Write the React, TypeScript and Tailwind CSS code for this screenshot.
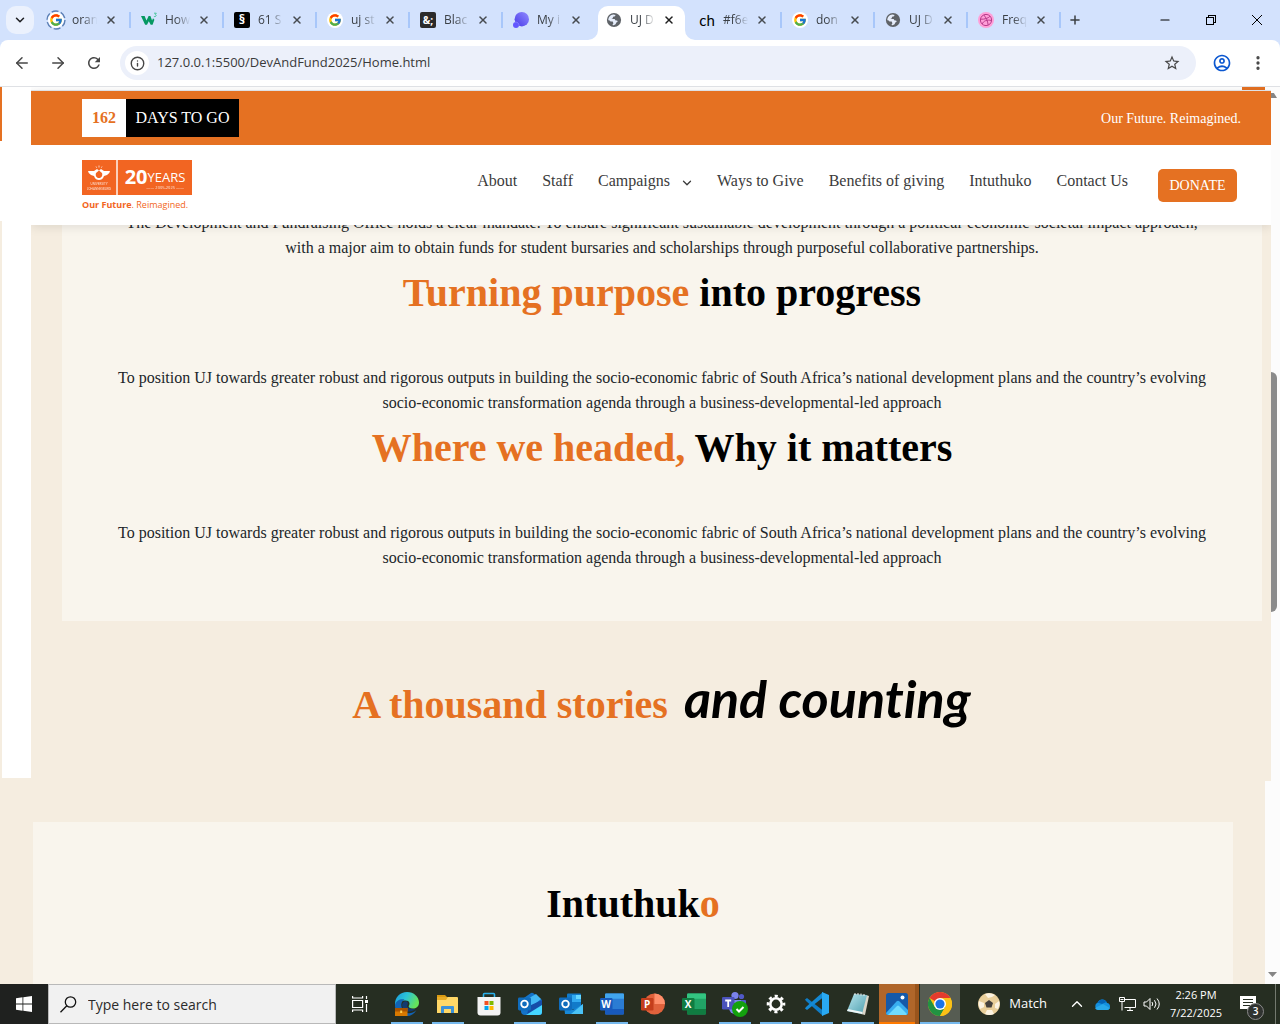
import React from "react";
import {
  ArrowLeft,
  ArrowRight,
  ChevronDown,
  ChevronUp,
  EllipsisVertical,
  Info,
  Minus,
  Plus,
  X,
} from "lucide-react";
import { FcGoogle } from "react-icons/fc";
import { MdOutlineAccountCircle, MdOutlineStarBorder, MdRefresh } from "react-icons/md";

const ui = "font-['Open_Sans','Noto_Sans',sans-serif]";
const serif = "font-['Liberation_Serif',serif]";

function Google() {
  return (
    <span className="flex size-4 items-center justify-center rounded-full bg-white">
      <FcGoogle size={14} />
    </span>
  );
}

function LoadingGoogle() {
  return (
    <span className="relative flex size-5 items-center justify-center">
      <svg viewBox="0 0 20 20" className="absolute inset-0 size-5" fill="none">
        <circle cx="10" cy="10" r="9" stroke="#5b7fb5" strokeWidth="1.4" strokeDasharray="7 2.42" />
      </svg>
      <Google />
    </span>
  );
}

function W3() {
  return (
    <svg viewBox="0 0 16 16" className="size-4" fill="#059862">
      <path d="M0 4h3.6l1.9 4.4L7.6 4h1.8l1.7 4.4.9-2.2 1.4 1.5-1.8 5.1H9.7L7.8 9.3 6 12.8H4.1z" />
      <path d="M13 1.2h2.3l-1 1.3c1.5.4 1.1 2.6-1.4 2" fill="none" stroke="#3cc292" strokeWidth=".9" />
    </svg>
  );
}

function Globe() {
  return (
    <svg viewBox="0 0 16 16" className="size-4">
      <circle cx="8" cy="8" r="7.1" fill="#5f6368" />
      <path
        d="M2.3 8.2c.1-3.2 2.3-5.4 5-5.7L9.7 3 8.6 4.5 7 4.8 6.8 6.2 5.4 6.9h3.2l1 1.5h1.5l.6 1.4-1.4.8-.7 1.7-2 1-1.2-.3 1-1.8-.7-1.7H4.6L3.2 8.2z"
        fill="#e6edfb"
      />
    </svg>
  );
}

function Dribbble() {
  return (
    <svg viewBox="0 0 16 16" className="size-4" fill="none" stroke="#b83d8c" strokeWidth="1">
      <circle cx="8" cy="8" r="8" fill="#ff9fd8" stroke="none" />
      <circle cx="8" cy="8" r="5.6" />
      <path d="M5.8 3c2.4 2.7 3.8 6 4.4 10M2.6 7.2C6.4 7.4 10 6.4 12 4.3M4.1 12c1.5-3.2 5-4.6 9.3-3.5" />
    </svg>
  );
}

function Blob() {
  return (
    <svg viewBox="0 0 16 16" className="size-4">
      <defs>
        <linearGradient id="blob" x1="1" y1="0" x2="0" y2="1">
          <stop offset="0" stopColor="#918cff" />
          <stop offset="1" stopColor="#493ae8" />
        </linearGradient>
      </defs>
      <circle cx="8.8" cy="7.2" r="7.2" fill="url(#blob)" />
      <circle cx="3" cy="13" r="3" fill="#6257ff" />
      <path d="M1.5 10.3c2.3-.9 4.4.7 4.6 3.3" stroke="#a5a0ff" strokeWidth=".5" fill="none" />
    </svg>
  );
}

const tabs: { title: string; icon: React.ReactNode; active?: boolean; noLine?: boolean }[] = [
  { title: "oran", icon: <LoadingGoogle /> },
  { title: "How", icon: <W3 /> },
  {
    title: "61 S",
    icon: (
      <span className="flex size-4 items-center justify-center rounded-xs bg-black text-[13px] font-bold text-white">§</span>
    ),
  },
  { title: "uj st", icon: <Google /> },
  {
    title: "Blac",
    icon: (
      <span className="flex size-4 items-center justify-center rounded-xs bg-[#2b2b2b] text-[10px] font-bold text-white">&amp;;</span>
    ),
  },
  { title: "My i", icon: <Blob />, noLine: true },
  { title: "UJ D", icon: <Globe />, active: true, noLine: true },
  { title: "#f6e", icon: <span className="font-['Lato',sans-serif] text-[15px] leading-4 text-black">ch</span> },
  { title: "don", icon: <Google /> },
  { title: "UJ D", icon: <Globe /> },
  { title: "Freq", icon: <Dribbble /> },
];

function TabStrip() {
  return (
    <div className="flex h-10 shrink-0 items-center bg-[#d3e2fd] pl-[6px] text-[#3b4046]">
      <button aria-label="Search tabs" className="mr-[3px] flex size-7 items-center justify-center rounded-[10px] bg-[#ebf1fd]">
        <ChevronDown size={14} strokeWidth={2.6} color="#202124" />
      </button>
      <div className="flex min-w-0 flex-1">
        {tabs.map((t, i) => (
          <div key={i} className="relative flex h-10 min-w-0 max-w-[93px] flex-1 items-center">
            {t.active && (
              <>
                <div className="absolute inset-x-[3px] top-[6px] bottom-0 rounded-t-[10px] bg-white" />
                <svg viewBox="0 0 10 10" className="absolute bottom-0 -left-[7px] size-[10px]" fill="#fff">
                  <path d="M10 0v10H0A10 10 0 0 0 10 0z" />
                </svg>
                <svg viewBox="0 0 10 10" className="absolute -right-[7px] bottom-0 size-[10px]" fill="#fff">
                  <path d="M0 0v10h10A10 10 0 0 1 0 0z" />
                </svg>
              </>
            )}
            <a href="#" className="relative flex min-w-0 items-center pl-[9px]">
              <span className="flex size-5 shrink-0 items-center justify-center">{t.icon}</span>
              <span className="ml-[6px] w-7 overflow-hidden text-[12px] whitespace-nowrap [mask-image:linear-gradient(to_right,black_40%,transparent_90%)]">
                {t.title}
              </span>
            </a>
            <button aria-label="Close tab" className="relative ml-[3px] flex size-4 items-center justify-center">
              <X size={12} strokeWidth={3} color={t.active ? "#1f1f1f" : "#474b50"} />
            </button>
            {!t.noLine && <div className="absolute -right-px h-4 w-[2px] bg-[#a8c7fa]" />}
          </div>
        ))}
        <button aria-label="New tab" className="flex h-10 w-[30px] items-center justify-center">
          <Plus size={14} strokeWidth={2.6} color="#3c4043" />
        </button>
      </div>
      <div className="flex shrink-0 text-black">
        <button aria-label="Minimize" className="flex h-10 w-[46px] items-center justify-center">
          <Minus size={14} strokeWidth={1.8} />
        </button>
        <button aria-label="Restore" className="flex h-10 w-[46px] items-center justify-center">
          <svg viewBox="0 0 10 10" className="size-[10px]" fill="none" stroke="#000" shapeRendering="crispEdges">
            <path d="M.5 2.5h7v7h-7zM2.5 2.5v-2h7v7h-2" />
          </svg>
        </button>
        <button aria-label="Close" className="flex h-10 w-[46px] items-center justify-center">
          <svg viewBox="0 0 10 10" className="size-[10px]" stroke="#000">
            <path d="M0 0l10 10M10 0L0 10" />
          </svg>
        </button>
      </div>
    </div>
  );
}

function Toolbar() {
  return (
    <div className="shrink-0 bg-[#d3e2fd]">
      <div className="flex h-[47px] items-center rounded-t-lg border-b border-[#dfe1e5] bg-white text-[#474747]">
        <button aria-label="Back" className="ml-[13px]">
          <ArrowLeft size={18} strokeWidth={2} />
        </button>
        <button aria-label="Forward" className="ml-[18px]">
          <ArrowRight size={18} strokeWidth={2} />
        </button>
        <button aria-label="Reload" className="ml-[18px]">
          <MdRefresh size={18} />
        </button>
        <form className="ml-[17px] flex h-[34px] min-w-0 flex-1 items-center rounded-full bg-[#ecf0fa] pl-[5px]">
          <button type="button" aria-label="Site information" className="flex size-6 items-center justify-center rounded-full bg-white">
            <Info size={15} strokeWidth={2.2} />
          </button>
          <input
            aria-label="Address"
            defaultValue="127.0.0.1:5500/DevAndFund2025/Home.html"
            className="ml-2 min-w-0 flex-1 bg-transparent text-[13px] text-[#3a3a3a] outline-none"
          />
          <button type="button" aria-label="Bookmark" className="mr-[15px]">
            <MdOutlineStarBorder size={18} />
          </button>
        </form>
        <button aria-label="Profile" className="ml-4">
          <MdOutlineAccountCircle size={20} color="#0b57d0" />
        </button>
        <button aria-label="Menu" className="mr-[13px] ml-[17px]">
          <EllipsisVertical size={18} strokeWidth={2.4} />
        </button>
      </div>
    </div>
  );
}

function Logo() {
  return (
    <a href="#" aria-label="University of Johannesburg" className={`flex w-[110px] flex-col text-[#f26522] ${ui}`}>
      <span className="flex h-[35px] w-full text-white">
        <span className="flex w-9 items-center justify-center border-r-2 border-[#fbd0bb] bg-[#f26522]">
          <svg viewBox="0 0 34 34" className="h-[34px] w-[34px]" fill="#fff">
            <path d="M6 11h6l3-2 2 1.5-3 2.5c-1 3 1 5 3 5s4-2 3-5l-3-2.5 2-1.5 3 2h6q0 2-3 4l-3 1c-1 3-3 4-5 4s-4-1-5-4l-3-1q-3-2-3-4z" />
            <path d="M14 6.5l.6 1.2M17 5.5v2M20 6.5l-.6 1.2" stroke="#fff" strokeWidth=".7" />
            <text x="17" y="25" textAnchor="middle" fontSize="3" fontFamily="Lato" opacity=".8">UNIVERSITY</text>
            <text x="17" y="29.5" textAnchor="middle" fontSize="3" fontFamily="Lato" opacity=".8">JOHANNESBURG</text>
          </svg>
        </span>
        <span className="relative flex flex-1 items-center justify-center bg-[#f26522]">
          <strong className="text-[20px] leading-none">20</strong>
          <span className="text-[13px] leading-none">YEARS</span>
          <span className="absolute right-2 bottom-1 text-[4px] leading-[6px] opacity-80">—— 2005-2025 ——</span>
        </span>
      </span>
      <span className="mt-1 text-[9px] leading-3 whitespace-nowrap">
        <b>Our Future</b>. Reimagined.
      </span>
    </a>
  );
}

function SiteHeader() {
  return (
    <header className="relative z-10 shadow-[0_2px_10px_rgba(0,0,0,0.1)]">
      <div className="mt-[3px] flex h-[55px] items-center justify-between border-t border-[#dfe1e5] bg-[#e57122] pr-[30px] pl-[51px]">
        <div className="flex h-[38px] items-stretch text-[16px]">
          <strong className="flex w-11 items-center justify-center bg-white text-[#e57122]">162</strong>
          <span className="flex w-[113px] items-center justify-center bg-black whitespace-nowrap text-white">DAYS TO GO</span>
        </div>
        <span className="text-[14px] text-white">Our Future. Reimagined.</span>
      </div>
      <div className="flex h-20 items-center justify-between bg-white pr-[34px] pl-[51px]">
        <Logo />
        <nav className="flex items-center gap-[30px] text-[16px] whitespace-nowrap text-[#3b3b3b]">
          <div className="flex items-center gap-[25px] pb-2">
            <a href="#">About</a>
            <a href="#">Staff</a>
            <a href="#" className="-mr-[2px] flex items-center gap-[10px]">
              Campaigns
              <ChevronDown size={14} strokeWidth={2.2} className="mt-1" />
            </a>
            <a href="#">Ways to Give</a>
            <a href="#">Benefits of giving</a>
            <a href="#">Intuthuko</a>
            <a href="#">Contact Us</a>
          </div>
          <button className="h-[33px] w-[79px] rounded-[5px] bg-[#e57122] text-[14px] text-white">DONATE</button>
        </nav>
      </div>
    </header>
  );
}

const outputs =
  "To position UJ towards greater robust and rigorous outputs in building the socio-economic fabric of South Africa’s national development plans and the country’s evolving socio-economic transformation agenda through a business-developmental-led approach";

function Block({ lead, rest }: { lead: string; rest: string }) {
  return (
    <section>
      <h2 className="mt-[5px] mb-11 text-[40px] leading-[56px] font-bold text-black">
        <span className="text-[#e57122]">{lead}</span> {rest}
      </h2>
      <p>{outputs}</p>
    </section>
  );
}

function Site() {
  return (
    <div className={`min-w-0 flex-1 overflow-hidden bg-[#f5ede0] ${serif}`}>
      <div className="-mt-[3px] bg-white pt-[3px]">
        <div className="mr-[6px] -mb-[3px] ml-auto h-[3px] w-[23px] bg-[#e57122]" />
        <SiteHeader />
      </div>
      <div className="mr-[9px] ml-[31px] bg-[#f9f5ed] px-[50px] pb-[51px] text-center text-[16px] leading-[25px] text-[#212529]">
        <p className="-mt-[15px]">
          The Development and Fundraising Office holds a clear mandate: To ensure significant sustainable development through a
          political-economic-societal impact approach, with a major aim to obtain funds for student bursaries and scholarships
          through purposeful collaborative partnerships.
        </p>
        <Block lead="Turning purpose" rest="into progress" />
        <Block lead="Where we headed," rest="Why it matters" />
      </div>
      <div className="flex h-40 items-center justify-center pl-[21px]">
        <h2 className="flex items-baseline gap-4 text-[40px] leading-[56px] font-bold whitespace-nowrap text-black">
          <span className="text-[#e57122]">A thousand stories</span>
          <span className="font-['Lato',cursive] text-[52px] italic [font-variant-ligatures:none]">and counting</span>
        </h2>
      </div>
    </div>
  );
}

function Office({ letter, dark, mid, light, round }: { letter: string; dark: string; mid: string; light: string; round?: boolean }) {
  return (
    <svg viewBox="0 0 24 24" className="size-6">
      {round ? (
        <>
          <circle cx="13.5" cy="12" r="10.5" fill={mid} />
          <path d="M13.5 1.5A10.5 10.5 0 0 1 24 12H13.5z" fill={light} />
        </>
      ) : (
        <>
          <rect x="5" y="1.5" width="19" height="21" rx="1.2" fill={mid} />
          <path d="M5 6.8V2.5a1 1 0 0 1 1-1h17a1 1 0 0 1 1 1v4.3z" fill={light} />
          <path d="M5 17h19v4.5a1 1 0 0 1-1 1H6a1 1 0 0 1-1-1z" fill={dark} />
        </>
      )}
      <rect x="0" y="6" width="12.5" height="12.5" rx="1.2" fill={dark} />
      <text x="6.2" y="15.8" textAnchor="middle" fontSize="10" fontWeight="700" fill="#fff">{letter}</text>
    </svg>
  );
}

function Outlook({ fresh }: { fresh?: boolean }) {
  return (
    <svg viewBox="0 0 24 24" className="size-6">
      {fresh ? (
        <>
          <path d="M3 8L13 1q1-.7 2 0l9 7v12a3 3 0 0 1-3 3H7a4 4 0 0 1-4-4z" fill="#1473c9" />
          <path d="M6 9l12-7 5 5-11 9z" fill="#43b8f4" />
          <path d="M11 14L24 8v12a3 3 0 0 1-3 3H9z" fill="#164ca8" />
          <path d="M8 23l16-10v7a3 3 0 0 1-3 3z" fill="#45d6ff" />
        </>
      ) : (
        <>
          <rect x="8" y="1.5" width="14" height="16" rx="1" fill="#117ac9" />
          <path d="M13 3h9v7h-9z" fill="#31a9ef" />
          <path d="M17 3h5v4h-5z" fill="#66d7ff" />
          <path d="M5 13l9 5 10-6v10H6z" fill="#1789d8" />
          <path d="M24 12v10H12z" fill="#4ac2f5" />
        </>
      )}
      <rect x="0" y="5.5" width="13" height="13" rx="1.4" fill="#0f6cbd" />
      <circle cx="6.5" cy="12" r="3.3" fill="none" stroke="#fff" strokeWidth="1.8" />
    </svg>
  );
}

function Edge() {
  return (
    <svg viewBox="0 0 24 24" className="size-6">
      <defs>
        <linearGradient id="edge" x1="0" y1="0" x2="1" y2=".4">
          <stop offset="0" stopColor="#1798df" />
          <stop offset=".5" stopColor="#2cc3d6" />
          <stop offset="1" stopColor="#66e25a" />
        </linearGradient>
      </defs>
      <path d="M0 12C0 5 5 0 12 0s12 5 12 10.5c0 4-3 6-6 6-3.5 0-5-1.5-4-3s1-5-3.5-5S1 11 1 17z" fill="url(#edge)" />
      <path d="M0 13c1-5 6-6.5 9.5-5.5-4 2-4.5 8 0 12 3.5 3 8 2 12-1.5C19 22 16 24 12 24 5 24 0 19 0 13z" fill="#1263b5" />
      <path d="M7 13c.5-3 3-4.5 5-3.5 1 .8 1 2.5.5 3.5-1.5 2.5 2 4 8 4-4 4-12.500 3.500-13.500-4z" fill="#123a70" />
      <rect x="0" y="16" width="12.5" height="8" fill="#d87900" />
      <path d="M0 16h12.5v3.5H0z" fill="#a85400" />
      <rect x="5.2" y="18.5" width="2" height="2.5" fill="#ffd050" />
    </svg>
  );
}

function Explorer() {
  return (
    <svg viewBox="0 0 24 24" className="size-6">
      <path d="M1 3h8l2 2h-10z" fill="#d99a12" />
      <path d="M1 5h20a1 1 0 0 1 1 1v15H1z" fill="#ffd767" />
      <path d="M1 5h11l-2 3H1z" fill="#e9ad27" />
      <path d="M5 21v-6q0-1 1-1h11q1 0 1 1v6h-3v-4H8v4z" fill="#3b91d8" />
    </svg>
  );
}

function Store() {
  return (
    <svg viewBox="0 0 24 24" className="size-6">
      <path d="M6.5 7V2.5q0-1 1-1h9q1 0 1 1V7" fill="none" stroke="#29b0ec" strokeWidth="1.6" />
      <path d="M.5 5h23v15.5q0 3-3 3h-17q-3 0-3-3z" fill="#f3f3f3" />
      <path d="M7.5 9h4v4h-4z" fill="#f25022" />
      <path d="M12.5 9h4v4h-4z" fill="#7fba00" />
      <path d="M7.5 14h4v4h-4z" fill="#00a4ef" />
      <path d="M12.5 14h4v4h-4z" fill="#ffb900" />
    </svg>
  );
}

function Teams() {
  return (
    <svg viewBox="0 0 26 26" className="size-[26px]">
      <circle cx="19.5" cy="5.5" r="2.6" fill="#5059c9" />
      <circle cx="13" cy="4.5" r="3.6" fill="#7b83eb" />
      <path d="M7 9h12v8a6 6 0 0 1-12 0z" fill="#7b83eb" />
      <path d="M19 9h4q1 0 1 1v6h-5z" fill="#5059c9" />
      <rect x="0" y="6" width="12.5" height="12.5" rx="1.2" fill="#4b53bc" />
      <path d="M3.2 9.5h6M6.2 9.5v6.5" stroke="#fff" strokeWidth="1.8" />
      <circle cx="18" cy="18" r="8" fill="#13a10e" />
      <path d="M14.5 18l2.5 2.5 4.5-4.5" fill="none" stroke="#fff" strokeWidth="2" />
    </svg>
  );
}

function Gear() {
  return (
    <svg viewBox="0 0 20 20" className="size-5" fill="none" stroke="#fff">
      <circle cx="10" cy="10" r="5.7" strokeWidth="2.6" />
      <circle cx="10" cy="10" r="8" strokeWidth="2.6" strokeDasharray="3.14 3.14" strokeDashoffset="1.57" />
    </svg>
  );
}

function VsCode() {
  return (
    <svg viewBox="0 0 24 24" className="size-6">
      <path d="M0 7.5L2 6l16 12.5V24L1 9z" fill="#0f7dc7" />
      <path d="M0 16.5L2 18 18 5.5V0L1 15z" fill="#1489d4" />
      <path d="M17 0l7 3v18l-7 3z" fill="#29a9f2" />
    </svg>
  );
}

function Notepad() {
  return (
    <svg viewBox="0 0 24 24" className="size-6">
      <defs>
        <linearGradient id="note" x1="0" y1="0" x2="1" y2="1">
          <stop offset="0" stopColor="#b8e6ee" />
          <stop offset="1" stopColor="#4d9eae" />
        </linearGradient>
      </defs>
      <path d="M20 3l3 1-4 19-4-1z" fill="#d9d5c8" />
      <path d="M8 2l13 1-5 19L1 19z" fill="url(#note)" />
      <path d="M1 19l15 3 .5-2L2 17z" fill="#eef5f5" />
      <path d="M9 1v2M12 1v2M15 1.5v2M18 2v2" stroke="#eee" />
    </svg>
  );
}

function Photos() {
  return (
    <svg viewBox="0 0 24 24" className="size-6">
      <rect x="1" y="1" width="22" height="22" rx="2.5" fill="#1559a8" />
      <path d="M1 21L11.5 9.5q1.5-1.5 3 0L23 18v3q0 2-2 2H3q-2 0-2-2z" fill="#38aef0" />
      <path d="M3 23l9-9q1-1 2 0l8 8-1 1z" fill="#70dcff" />
      <circle cx="17.5" cy="5.5" r="2" fill="#fff" />
    </svg>
  );
}

function Chrome() {
  return (
    <svg viewBox="0 0 24 24" className="size-6">
      <circle cx="12" cy="12" r="12" fill="#fbc116" />
      <path d="M12 12L1.6 6A12 12 0 0 1 22.4 6z" fill="#e33b2e" />
      <path d="M1.6 6A12 12 0 0 0 12 24l5.2-9L12 12 6.8 15z" fill="#229342" />
      <path d="M12 6h10.4A12 12 0 0 1 12 24l5.2-9z" fill="#fbc116" />
      <circle cx="12" cy="12" r="6" fill="#fff" />
      <circle cx="12" cy="12" r="4.6" fill="#1a73e8" />
    </svg>
  );
}

const apps: { name: string; icon: React.ReactNode; open?: boolean; tone?: "orange" | "grey" }[] = [
  { name: "Edge", icon: <Edge />, open: true },
  { name: "File Explorer", icon: <Explorer />, open: true },
  { name: "Store", icon: <Store /> },
  { name: "Outlook (new)", icon: <Outlook fresh />, open: true },
  { name: "Outlook", icon: <Outlook /> },
  { name: "Word", icon: <Office letter="W" dark="#185abd" mid="#2b7cd3" light="#41a5ee" />, open: true },
  { name: "PowerPoint", icon: <Office letter="P" dark="#c43e1c" mid="#e0623c" light="#ff8f6b" round /> },
  { name: "Excel", icon: <Office letter="X" dark="#107c41" mid="#21a366" light="#33c481" /> },
  { name: "Teams", icon: <Teams />, open: true },
  { name: "Settings", icon: <Gear />, open: true },
  { name: "VS Code", icon: <VsCode />, open: true },
  { name: "Notepad", icon: <Notepad />, open: true },
  { name: "Photos", icon: <Photos />, tone: "orange" },
  { name: "Chrome", icon: <Chrome />, tone: "grey" },
];

function Taskbar() {
  return (
    <footer className={`flex h-10 shrink-0 items-center bg-[#262e22] text-white ${ui}`}>
      <button aria-label="Start" className="flex h-10 w-12 items-center justify-center bg-[#1f211f]">
        <svg viewBox="0 0 16 16" className="size-4" fill="#fff">
          <path d="M0 2.2L6.5 1.3v6.2H0zM7.3 1.2L16 0v7.5H7.3zM0 8.4h6.5v6.3L0 13.8zM7.3 8.4H16V16l-8.7-1.2z" />
        </svg>
      </button>
      <label className="flex h-10 w-[288px] items-center border border-[#b9b9b9] bg-[#f1f1f1] pl-[11px]">
        <svg viewBox="0 0 17 17" className="size-[17px]" fill="none" stroke="#111" strokeWidth="1.3">
          <circle cx="10.5" cy="6" r="5.2" />
          <path d="M6.8 9.8L.5 16.3" />
        </svg>
        <input aria-label="Search" placeholder="Type here to search" className="ml-[11px] min-w-0 flex-1 bg-transparent text-[14px] outline-none placeholder:text-[#2b2b2b]" />
      </label>
      <button aria-label="Task view" className="mr-[3px] flex h-10 w-12 items-center justify-center">
        <svg viewBox="0 0 17 16" className="h-4 w-[17px]" fill="none" stroke="#fff" strokeWidth="1.2">
          <path d="M.6 4.5h10v7H.6zM.6 0v2h10V0M.6 16v-2h10v2M14.5 0v3M14.5 8v8" />
          <path d="M13 4h3v3h-3z" fill="#fff" stroke="none" />
        </svg>
      </button>
      <div className="flex gap-px">
        {apps.map((a) => (
          <button
            key={a.name}
            aria-label={a.name}
            className={`relative flex h-10 w-10 items-center justify-center ${a.tone === "orange" ? "border-r-4 border-r-[#99541c] bg-[#b0662a]" : ""} ${a.tone === "grey" ? "bg-[#565c52]" : ""}`}
          >
            {a.icon}
            {a.open && <span className="absolute inset-x-1 bottom-0 h-[2px] bg-[#76b9ed]" />}
            {a.tone === "grey" && <span className="absolute inset-x-0 bottom-0 h-[2px] bg-[#76b9ed]" />}
            {a.tone === "orange" && <span className="absolute inset-x-0 bottom-0 h-[2px] bg-[#ff7a00]" />}
          </button>
        ))}
      </div>
      <div className="ml-auto flex h-10 items-center">
        <button className="flex items-center text-[13px]">
          <svg viewBox="0 0 22 22" className="mr-[9px] size-[22px]">
            <circle cx="11" cy="11" r="11" fill="#e9cf9a" />
            <path d="M7 1l3 4 4-1 3-2A11 11 0 0 0 7 1zM1 8l5 2v4l-4 2A11 11 0 0 1 1 8zM21 8l-4 3v4l3 1a11 11 0 0 0 1-8zM7 21l2-4h5l2 4a11 11 0 0 1-9 0z" fill="#fbf3e2" />
            <path d="M11 7l4 3-1.5 4.5h-5L7 10z" fill="#45413c" />
          </svg>
          Match
        </button>
        <button aria-label="Show hidden icons" className="ml-[21px]">
          <ChevronUp size={18} strokeWidth={1.8} />
        </button>
        <svg viewBox="0 0 17 11" className="ml-2 h-[11px] w-[17px]">
          <path d="M4 11a4 4 0 0 1-.3-7.5A5 5 0 0 1 13 4a3.6 3.6 0 0 1 .5 7z" fill="#1490df" />
          <path d="M1 9l8-4 7 4q-1 2-3 2H4Q2 11 1 9z" fill="#28a8ea" />
          <path d="M3.5 3.6A5 5 0 0 1 12.5 3L8 5z" fill="#0364b8" />
        </svg>
        <svg viewBox="0 0 17 14" className="ml-2 h-[14px] w-[17px]" fill="none" stroke="#fff">
          <path d="M5.5 2.5h11v8h-11M8 13.5h6M11 10.5v3M.5.5h5v4h-5zM3 4.5v9M1.5 2.5h3" />
        </svg>
        <svg viewBox="0 0 18 14" className="ml-[7px] h-[14px] w-[18px]" fill="none" stroke="#fff">
          <path d="M1 5h2.5L7 1.5v11L3.5 9H1zM9 5q1.5 2 0 4M11.5 3.2q3 3.8 0 7.6M14 1.5q4.5 5.5 0 11" />
        </svg>
        <div className="ml-2 w-[54px] text-center text-[11px] leading-[18px] whitespace-nowrap">
          <div>2:26 PM</div>
          <div>7/22/2025</div>
        </div>
        <button aria-label="3 notifications" className="relative ml-[17px] h-10 w-[27px]">
          <svg viewBox="0 0 16 17" className="absolute top-3 left-0 h-[17px] w-4">
            <path d="M0 0h16v13h-5v4l-4-4H0z" fill="#fff" />
            <path d="M3 3.5h10M3 6.5h10M3 9.5h7" stroke="#262e22" />
          </svg>
          <span className="absolute top-[19px] left-[7px] flex size-[17px] items-center justify-center rounded-full border border-[#8a8a8a] bg-[#303330] text-[10px] font-semibold">3</span>
        </button>
        <div className="ml-2 h-10 w-px bg-[#73796f]" />
        <div className="w-1" />
      </div>
    </footer>
  );
}

export default function App() {
  return (
    <div className={`flex h-screen flex-col overflow-hidden bg-[#fcfcfc] ${ui}`}>
      <TabStrip />
      <Toolbar />
      <main className="flex min-h-0 flex-1 flex-col">
        <div className="flex shrink-0">
          <div className="flex w-[31px] bg-[#f5ede0] pb-[3px]">
            <div className="flex w-[2px] flex-col">
              <div className="h-[54px] bg-[#e57122]" />
              <div className="h-20 bg-white" />
            </div>
            <div className="flex-1 bg-white" />
          </div>
          <Site />
          <div className="relative w-[9px]">
            <svg viewBox="0 0 9 5" className="mt-[6px] h-[5px] w-[9px]" fill="#858585">
              <path d="M1-3l5 8H-4z" />
            </svg>
            <div className="absolute top-[285px] left-0 h-60 w-[6px] rounded-r-full bg-[#8b8b8b]" />
          </div>
        </div>
        <div className="flex min-h-0 flex-1">
          <div className={`min-w-0 flex-1 bg-[#f5ede0] pt-[41px] pr-8 pl-[33px] ${serif}`}>
            <div className="h-full bg-[#f9f5ed] pt-[54px] text-center">
              <h2 className="text-[40px] leading-[56px] font-bold text-black">
                Intuthuk<span className="text-[#e57122]">o</span>
              </h2>
            </div>
          </div>
          <div className="flex w-[15px] flex-col justify-end">
            <svg viewBox="0 0 15 13" className="h-[13px] w-[15px]" fill="#858585">
              <path d="M3 1h9L7.5 6z" />
            </svg>
          </div>
        </div>
      </main>
      <Taskbar />
    </div>
  );
}
